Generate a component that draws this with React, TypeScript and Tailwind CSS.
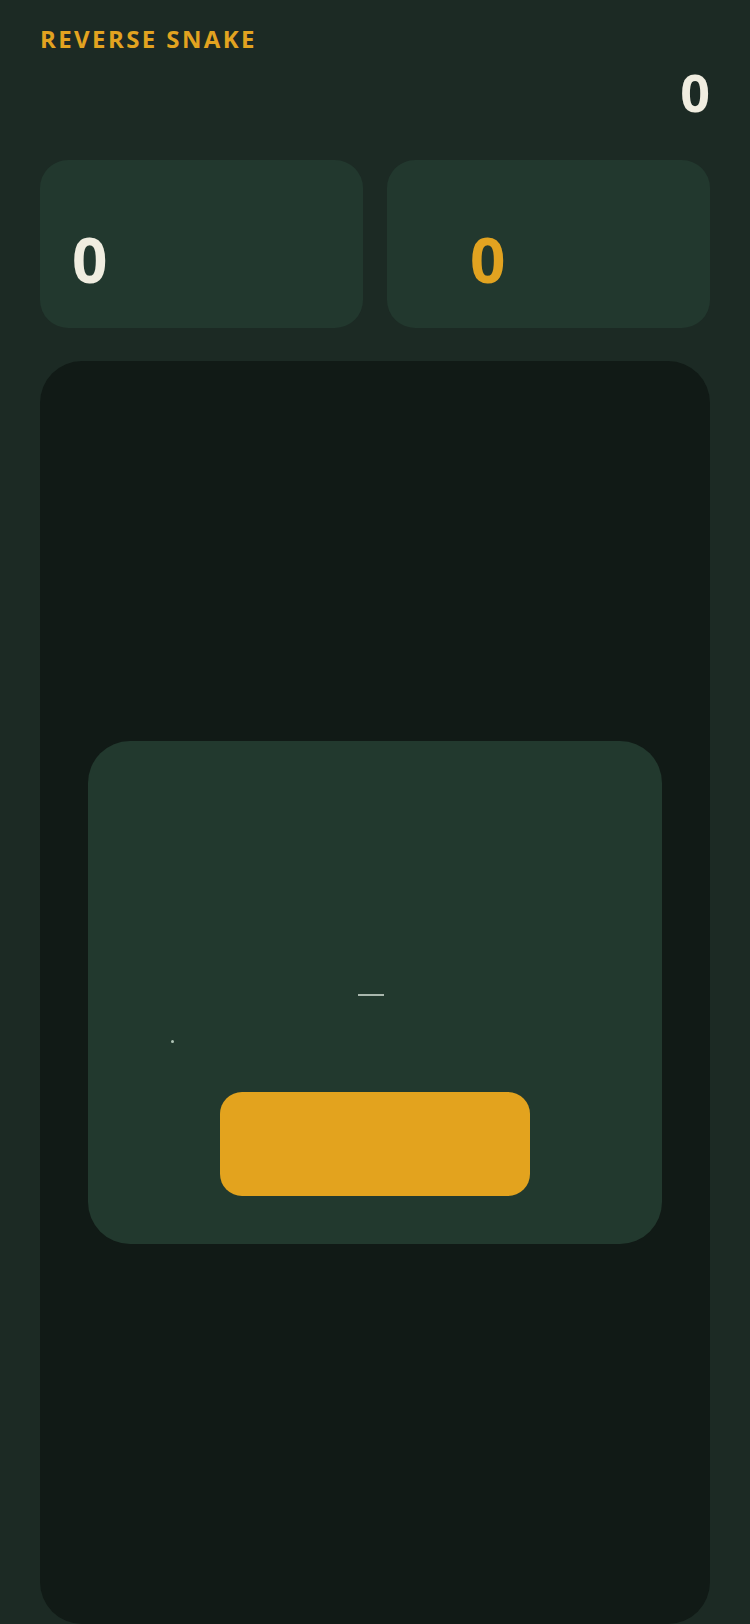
import React from "react";

export default function App() {
  return (
    <div
      className="min-h-screen w-[750px] bg-[#1c2a24] px-10 pt-[27px] overflow-hidden"
      style={{ fontFamily: '"Open Sans", "Liberation Sans", sans-serif' }}
    >
      <div className="text-[24px] leading-none font-bold tracking-[0.1em] text-[#e2a320]">
        REVERSE SNAKE
      </div>
      <div className="mt-[15px] flex justify-end">
        <div className="text-[52px] leading-none font-bold text-[#f0ede0]">0</div>
      </div>

      <div className="mt-[42px] grid grid-cols-2 gap-6">
        <div className="h-[168px] rounded-[28px] bg-[#22382e] pl-[32px] pt-[68px]">
          <div className="text-[62px] leading-none font-bold text-[#f0ede0]">0</div>
        </div>
        <div className="h-[168px] rounded-[28px] bg-[#22382e] pl-[83px] pt-[68px]">
          <div className="text-[62px] leading-none font-bold text-[#e2a320]">0</div>
        </div>
      </div>

      <div className="mt-[33px] h-[1263px] rounded-[42px] bg-[#111a16] flex items-center justify-center">
        <div className="w-[574px] h-[503px] rounded-[42px] bg-[#22392e] p-12 flex flex-col">
          <div className="mt-[205px] ml-[222px] w-[26px] h-[2px] bg-[#a9b7ad]" />
          <div className="mt-[44px] ml-[35px] w-[3px] h-[3px] rounded-full bg-[#b0c4b6]" />
          <div className="mt-[49px] self-center w-[310px] h-[104px] rounded-[22px] bg-[#e3a31e]" />
        </div>
      </div>
    </div>
  );
}
